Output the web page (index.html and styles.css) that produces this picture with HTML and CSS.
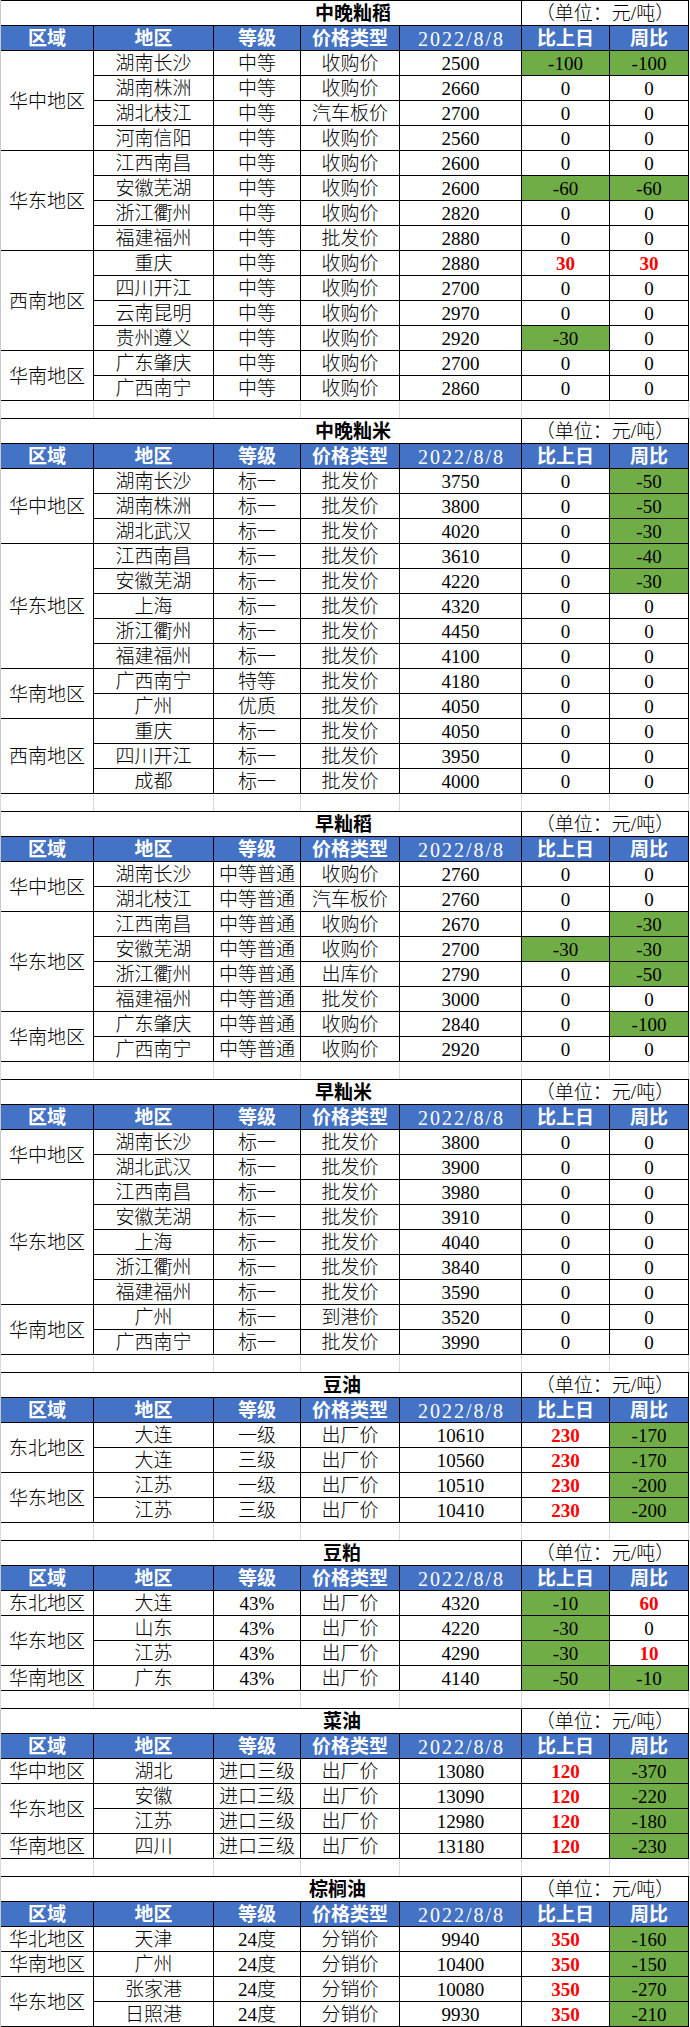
FILE: index.html
```html
<!DOCTYPE html>
<html lang="zh-CN">
<head>
<meta charset="utf-8">
<title>农产品价格</title>
<link rel="stylesheet" href="styles.css">
</head>
<body>
<main class="page">

<section class="sheet">
  <div class="title">中晚籼稻</div><div class="unit">（单位：元/吨）</div>
  <div class="h">区域</div><div class="h">地区</div><div class="h">等级</div><div class="h">价格类型</div><div class="h d">2022/8/8</div><div class="h">比上日</div><div class="h">周比</div>
  <div class="region s4">华中地区</div>
  <div>湖南长沙</div><div>中等</div><div>收购价</div><div>2500</div><div class="g">-100</div><div class="g">-100</div>
  <div>湖南株洲</div><div>中等</div><div>收购价</div><div>2660</div><div>0</div><div>0</div>
  <div>湖北枝江</div><div>中等</div><div>汽车板价</div><div>2700</div><div>0</div><div>0</div>
  <div>河南信阳</div><div>中等</div><div>收购价</div><div>2560</div><div>0</div><div>0</div>
  <div class="region s4">华东地区</div>
  <div>江西南昌</div><div>中等</div><div>收购价</div><div>2600</div><div>0</div><div>0</div>
  <div>安徽芜湖</div><div>中等</div><div>收购价</div><div>2600</div><div class="g">-60</div><div class="g">-60</div>
  <div>浙江衢州</div><div>中等</div><div>收购价</div><div>2820</div><div>0</div><div>0</div>
  <div>福建福州</div><div>中等</div><div>批发价</div><div>2880</div><div>0</div><div>0</div>
  <div class="region s4">西南地区</div>
  <div>重庆</div><div>中等</div><div>收购价</div><div>2880</div><div class="r">30</div><div class="r">30</div>
  <div>四川开江</div><div>中等</div><div>收购价</div><div>2700</div><div>0</div><div>0</div>
  <div>云南昆明</div><div>中等</div><div>收购价</div><div>2970</div><div>0</div><div>0</div>
  <div>贵州遵义</div><div>中等</div><div>收购价</div><div>2920</div><div class="g">-30</div><div>0</div>
  <div class="region s2">华南地区</div>
  <div>广东肇庆</div><div>中等</div><div>收购价</div><div>2700</div><div>0</div><div>0</div>
  <div>广西南宁</div><div>中等</div><div>收购价</div><div>2860</div><div>0</div><div>0</div>
</section>

<div class="gap"><i></i><i></i><i></i><i></i><i></i><i></i><i></i></div>

<section class="sheet">
  <div class="title">中晚籼米</div><div class="unit">（单位：元/吨）</div>
  <div class="h">区域</div><div class="h">地区</div><div class="h">等级</div><div class="h">价格类型</div><div class="h d">2022/8/8</div><div class="h">比上日</div><div class="h">周比</div>
  <div class="region s3">华中地区</div>
  <div>湖南长沙</div><div>标一</div><div>批发价</div><div>3750</div><div>0</div><div class="g">-50</div>
  <div>湖南株洲</div><div>标一</div><div>批发价</div><div>3800</div><div>0</div><div class="g">-50</div>
  <div>湖北武汉</div><div>标一</div><div>批发价</div><div>4020</div><div>0</div><div class="g">-30</div>
  <div class="region s5">华东地区</div>
  <div>江西南昌</div><div>标一</div><div>批发价</div><div>3610</div><div>0</div><div class="g">-40</div>
  <div>安徽芜湖</div><div>标一</div><div>批发价</div><div>4220</div><div>0</div><div class="g">-30</div>
  <div>上海</div><div>标一</div><div>批发价</div><div>4320</div><div>0</div><div>0</div>
  <div>浙江衢州</div><div>标一</div><div>批发价</div><div>4450</div><div>0</div><div>0</div>
  <div>福建福州</div><div>标一</div><div>批发价</div><div>4100</div><div>0</div><div>0</div>
  <div class="region s2">华南地区</div>
  <div>广西南宁</div><div>特等</div><div>批发价</div><div>4180</div><div>0</div><div>0</div>
  <div>广州</div><div>优质</div><div>批发价</div><div>4050</div><div>0</div><div>0</div>
  <div class="region s3">西南地区</div>
  <div>重庆</div><div>标一</div><div>批发价</div><div>4050</div><div>0</div><div>0</div>
  <div>四川开江</div><div>标一</div><div>批发价</div><div>3950</div><div>0</div><div>0</div>
  <div>成都</div><div>标一</div><div>批发价</div><div>4000</div><div>0</div><div>0</div>
</section>

<div class="gap"><i></i><i></i><i></i><i></i><i></i><i></i><i></i></div>

<section class="sheet">
  <div class="title">早籼稻</div><div class="unit">（单位：元/吨）</div>
  <div class="h">区域</div><div class="h">地区</div><div class="h">等级</div><div class="h">价格类型</div><div class="h d">2022/8/8</div><div class="h">比上日</div><div class="h">周比</div>
  <div class="region s2">华中地区</div>
  <div>湖南长沙</div><div>中等普通</div><div>收购价</div><div>2760</div><div>0</div><div>0</div>
  <div>湖北枝江</div><div>中等普通</div><div>汽车板价</div><div>2760</div><div>0</div><div>0</div>
  <div class="region s4">华东地区</div>
  <div>江西南昌</div><div>中等普通</div><div>收购价</div><div>2670</div><div>0</div><div class="g">-30</div>
  <div>安徽芜湖</div><div>中等普通</div><div>收购价</div><div>2700</div><div class="g">-30</div><div class="g">-30</div>
  <div>浙江衢州</div><div>中等普通</div><div>出库价</div><div>2790</div><div>0</div><div class="g">-50</div>
  <div>福建福州</div><div>中等普通</div><div>批发价</div><div>3000</div><div>0</div><div>0</div>
  <div class="region s2">华南地区</div>
  <div>广东肇庆</div><div>中等普通</div><div>收购价</div><div>2840</div><div>0</div><div class="g">-100</div>
  <div>广西南宁</div><div>中等普通</div><div>收购价</div><div>2920</div><div>0</div><div>0</div>
</section>

<div class="gap"><i></i><i></i><i></i><i></i><i></i><i></i><i></i></div>

<section class="sheet">
  <div class="title">早籼米</div><div class="unit">（单位：元/吨）</div>
  <div class="h">区域</div><div class="h">地区</div><div class="h">等级</div><div class="h">价格类型</div><div class="h d">2022/8/8</div><div class="h">比上日</div><div class="h">周比</div>
  <div class="region s2">华中地区</div>
  <div>湖南长沙</div><div>标一</div><div>批发价</div><div>3800</div><div>0</div><div>0</div>
  <div>湖北武汉</div><div>标一</div><div>批发价</div><div>3900</div><div>0</div><div>0</div>
  <div class="region s5">华东地区</div>
  <div>江西南昌</div><div>标一</div><div>批发价</div><div>3980</div><div>0</div><div>0</div>
  <div>安徽芜湖</div><div>标一</div><div>批发价</div><div>3910</div><div>0</div><div>0</div>
  <div>上海</div><div>标一</div><div>批发价</div><div>4040</div><div>0</div><div>0</div>
  <div>浙江衢州</div><div>标一</div><div>批发价</div><div>3840</div><div>0</div><div>0</div>
  <div>福建福州</div><div>标一</div><div>批发价</div><div>3590</div><div>0</div><div>0</div>
  <div class="region s2">华南地区</div>
  <div>广州</div><div>标一</div><div>到港价</div><div>3520</div><div>0</div><div>0</div>
  <div>广西南宁</div><div>标一</div><div>批发价</div><div>3990</div><div>0</div><div>0</div>
</section>

<div class="gap"><i></i><i></i><i></i><i></i><i></i><i></i><i></i></div>

<section class="sheet">
  <div class="title short">豆油</div><div class="unit">（单位：元/吨）</div>
  <div class="h">区域</div><div class="h">地区</div><div class="h">等级</div><div class="h">价格类型</div><div class="h d">2022/8/8</div><div class="h">比上日</div><div class="h">周比</div>
  <div class="region s2">东北地区</div>
  <div>大连</div><div>一级</div><div>出厂价</div><div>10610</div><div class="r">230</div><div class="g">-170</div>
  <div>大连</div><div>三级</div><div>出厂价</div><div>10560</div><div class="r">230</div><div class="g">-170</div>
  <div class="region s2">华东地区</div>
  <div>江苏</div><div>一级</div><div>出厂价</div><div>10510</div><div class="r">230</div><div class="g">-200</div>
  <div>江苏</div><div>三级</div><div>出厂价</div><div>10410</div><div class="r">230</div><div class="g">-200</div>
</section>

<div class="gap"><i></i><i></i><i></i><i></i><i></i><i></i><i></i></div>

<section class="sheet">
  <div class="title short">豆粕</div><div class="unit">（单位：元/吨）</div>
  <div class="h">区域</div><div class="h">地区</div><div class="h">等级</div><div class="h">价格类型</div><div class="h d">2022/8/8</div><div class="h">比上日</div><div class="h">周比</div>
  <div class="region">东北地区</div>
  <div>大连</div><div>43%</div><div>出厂价</div><div>4320</div><div class="g">-10</div><div class="r">60</div>
  <div class="region s2">华东地区</div>
  <div>山东</div><div>43%</div><div>出厂价</div><div>4220</div><div class="g">-30</div><div>0</div>
  <div>江苏</div><div>43%</div><div>出厂价</div><div>4290</div><div class="g">-30</div><div class="r">10</div>
  <div class="region">华南地区</div>
  <div>广东</div><div>43%</div><div>出厂价</div><div>4140</div><div class="g">-50</div><div class="g">-10</div>
</section>

<div class="gap"><i></i><i></i><i></i><i></i><i></i><i></i><i></i></div>

<section class="sheet">
  <div class="title short">菜油</div><div class="unit">（单位：元/吨）</div>
  <div class="h">区域</div><div class="h">地区</div><div class="h">等级</div><div class="h">价格类型</div><div class="h d">2022/8/8</div><div class="h">比上日</div><div class="h">周比</div>
  <div class="region">华中地区</div>
  <div>湖北</div><div>进口三级</div><div>出厂价</div><div>13080</div><div class="r">120</div><div class="g">-370</div>
  <div class="region s2">华东地区</div>
  <div>安徽</div><div>进口三级</div><div>出厂价</div><div>13090</div><div class="r">120</div><div class="g">-220</div>
  <div>江苏</div><div>进口三级</div><div>出厂价</div><div>12980</div><div class="r">120</div><div class="g">-180</div>
  <div class="region">华南地区</div>
  <div>四川</div><div>进口三级</div><div>出厂价</div><div>13180</div><div class="r">120</div><div class="g">-230</div>
</section>

<div class="gap"><i></i><i></i><i></i><i></i><i></i><i></i><i></i></div>

<section class="sheet">
  <div class="title wide">棕榈油</div><div class="unit">（单位：元/吨）</div>
  <div class="h">区域</div><div class="h">地区</div><div class="h">等级</div><div class="h">价格类型</div><div class="h d">2022/8/8</div><div class="h">比上日</div><div class="h">周比</div>
  <div class="region">华北地区</div>
  <div>天津</div><div>24度</div><div>分销价</div><div>9940</div><div class="r">350</div><div class="g">-160</div>
  <div class="region">华南地区</div>
  <div>广州</div><div>24度</div><div>分销价</div><div>10400</div><div class="r">350</div><div class="g">-150</div>
  <div class="region s2">华东地区</div>
  <div>张家港</div><div>24度</div><div>分销价</div><div>10080</div><div class="r">350</div><div class="g">-270</div>
  <div>日照港</div><div>24度</div><div>分销价</div><div>9930</div><div class="r">350</div><div class="g">-210</div>
</section>

</main>
</body>
</html>
```

FILE: styles.css
```css
* { box-sizing: border-box; }

html, body {
  margin: 0;
  padding: 0;
  background: #ffffff;
}

body {
  font-family: "Liberation Serif", "Noto Sans CJK SC", serif;
  font-size: 19px;
  color: #000000;
  width: 690px;
}

.page {
  display: flex;
  flex-direction: column;
  width: 690px;
}

.sheet {
  display: grid;
  grid-template-columns: 92px 119px 86px 98px 121px 87px 78px;
  grid-auto-rows: 24px;
  gap: 1px;
  padding: 1px 1px 1px 0;
  background: #000000;
  border-left: 1px solid #c8c8c8;
  width: 689px;
}

.sheet > div {
  background: #ffffff;
  display: flex;
  align-items: center;
  justify-content: center;
  line-height: 1;
  font-weight: 300;
  white-space: nowrap;
  padding-top: 1px;
}

.sheet > .title {
  grid-column: span 5;
  justify-content: flex-start;
  padding-left: 314px;
  font-weight: 700;
}

.sheet > .title.short { padding-left: 322px; }
.sheet > .title.wide { padding-left: 308px; }

.sheet > .unit {
  grid-column: span 2;
}

.sheet > .h {
  background: #4472c4;
  color: #ffffff;
  font-weight: 700;
}

.sheet > .h.d {
  font-size: 20px;
  font-weight: 400;
  letter-spacing: 2px;
  padding-left: 2px;
}

.sheet > .region.s2 { grid-row: span 2; }
.sheet > .region.s3 { grid-row: span 3; }
.sheet > .region.s4 { grid-row: span 4; }
.sheet > .region.s5 { grid-row: span 5; }

.sheet > .g { background: #70ad47; }

.sheet > .r {
  color: #ff0000;
  font-weight: 700;
}

.gap {
  display: grid;
  grid-template-columns: 92px 119px 86px 98px 121px 87px 78px;
  column-gap: 1px;
  height: 17px;
  width: 689px;
  padding-right: 1px;
  background: #d9d9d9;
  border-left: 1px solid #d9d9d9;
}

.gap > i {
  background: #ffffff;
}
```
